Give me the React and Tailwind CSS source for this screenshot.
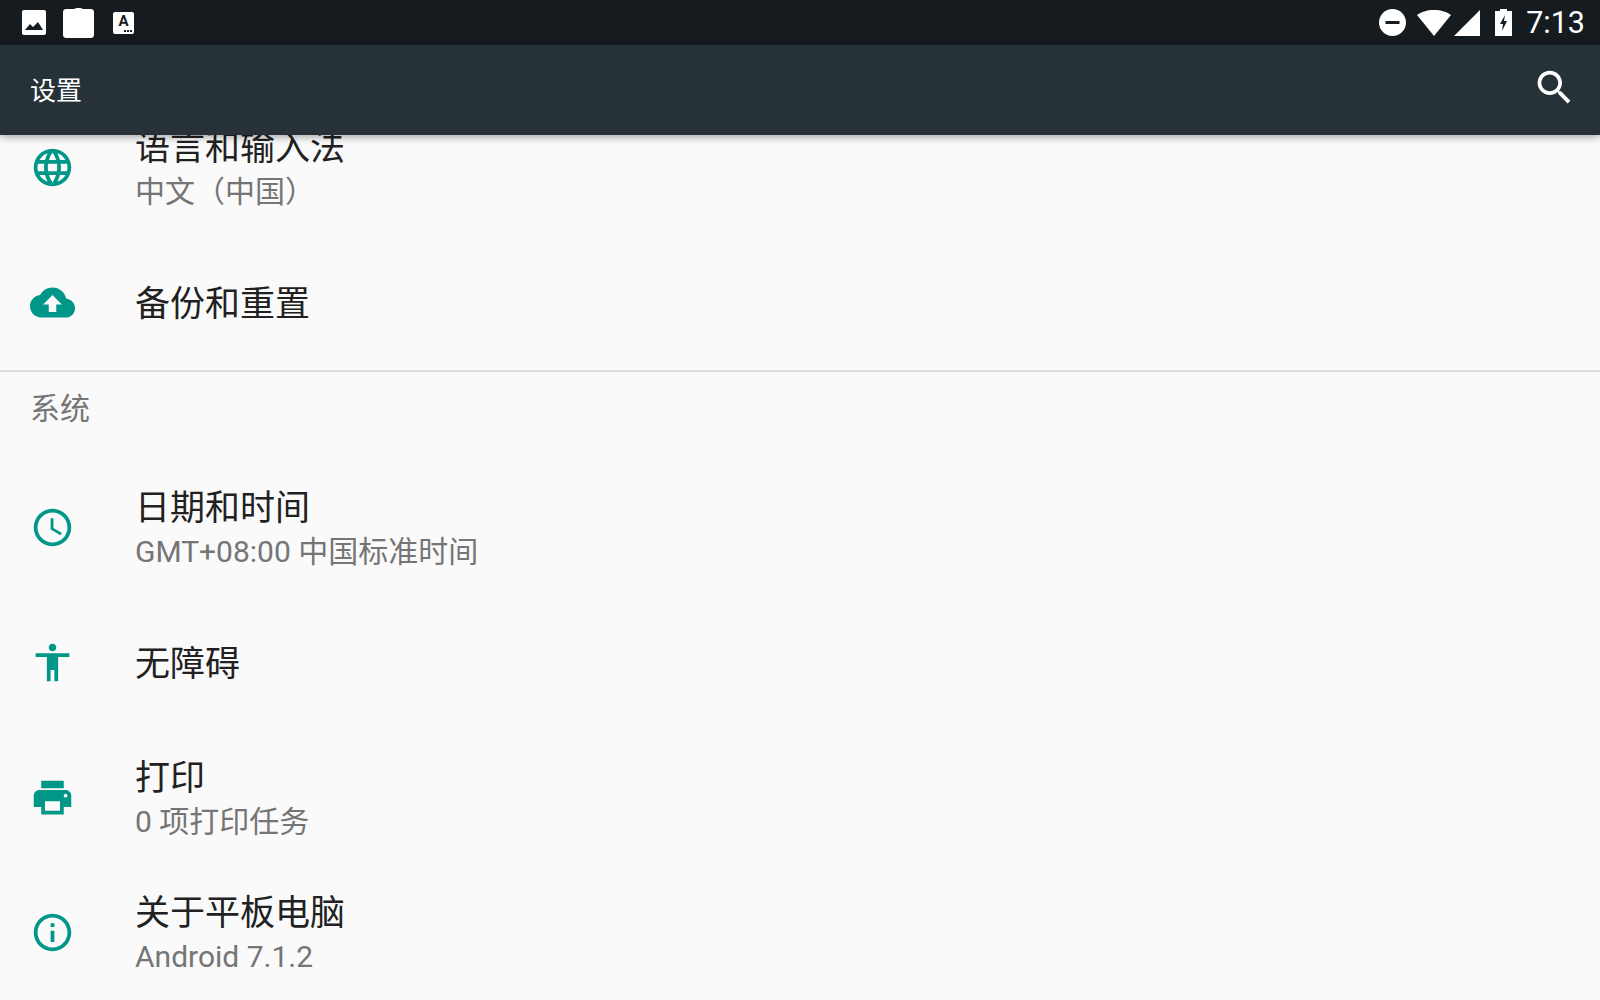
import React from 'react';

const FONT = "font-['Roboto','Noto_Sans_CJK_SC',sans-serif]";

const paths = {
  language:
    'M11.99 2C6.47 2 2 6.48 2 12s4.47 10 9.99 10C17.52 22 22 17.52 22 12S17.52 2 11.99 2zm6.93 6h-2.95c-.32-1.25-.78-2.45-1.38-3.56 1.84.63 3.37 1.91 4.33 3.56zM12 4.04c.83 1.2 1.48 2.53 1.91 3.96h-3.82c.43-1.43 1.08-2.76 1.91-3.96zM4.26 14C4.1 13.36 4 12.69 4 12s.1-1.36.26-2h3.38c-.08.66-.14 1.32-.14 2 0 .68.06 1.34.14 2H4.26zm.82 2h2.95c.32 1.25.78 2.45 1.38 3.56-1.84-.63-3.37-1.9-4.33-3.56zm2.95-8H5.08c.96-1.66 2.49-2.93 4.33-3.56C8.81 5.55 8.35 6.75 8.03 8zM12 19.96c-.83-1.2-1.48-2.53-1.91-3.96h3.82c-.43 1.43-1.08 2.76-1.91 3.96zM14.34 14H9.66c-.09-.66-.16-1.32-.16-2 0-.68.07-1.35.16-2h4.68c.09.65.16 1.32.16 2 0 .68-.07 1.34-.16 2zm.25 5.56c.6-1.11 1.06-2.31 1.38-3.56h2.95c-.96 1.65-2.49 2.93-4.33 3.56zM16.36 14c.08-.66.14-1.32.14-2 0-.68-.06-1.34-.14-2h3.38c.16.64.26 1.31.26 2s-.1 1.36-.26 2h-3.38z',
  backup:
    'M19.35 10.04C18.67 6.59 15.64 4 12 4 9.11 4 6.6 5.64 5.35 8.04 2.34 8.36 0 10.91 0 14c0 3.31 2.69 6 6 6h13c2.76 0 5-2.24 5-5 0-2.64-2.05-4.78-4.65-4.96zM14 13v4h-4v-4H7l5-5 5 5h-3z',
  clock:
    'M11.99 2C6.47 2 2 6.48 2 12s4.47 10 9.99 10C17.52 22 22 17.52 22 12S17.52 2 11.99 2zM12 20c-4.42 0-8-3.58-8-8s3.58-8 8-8 8 3.58 8 8-3.58 8-8 8zm.5-13H11v6l5.25 3.15.75-1.23-4.5-2.67z',
  accessibility:
    'M12 2c1.1 0 2 .9 2 2s-.9 2-2 2-2-.9-2-2 .9-2 2-2zm9 7h-6v13h-2v-6h-2v6H9V9H3V7h18v2z',
  print:
    'M19 8H5c-1.66 0-3 1.34-3 3v6h4v4h12v-4h4v-6c0-1.66-1.34-3-3-3zm-3 11H8v-5h8v5zm3-7c-.55 0-1-.45-1-1s.45-1 1-1 1 .45 1 1-.45 1-1 1zm-1-9H6v4h12V3z',
  info:
    'M11 17h2v-6h-2v6zm1-15C6.48 2 2 6.48 2 12s4.48 10 10 10 10-4.48 10-10S17.52 2 12 2zm0 18c-4.41 0-8-3.59-8-8s3.59-8 8-8 8 3.59 8 8-3.59 8-8 8zM11 9h2V7h-2v2z',
  search:
    'M15.5 14h-.79l-.28-.27C15.41 12.59 16 11.11 16 9.5 16 5.91 13.09 3 9.5 3S3 5.91 3 9.5 5.91 16 9.5 16c1.61 0 3.09-.59 4.23-1.57l.27.28v.79l5 4.99L20.49 19l-4.99-5zm-6 0C7.01 14 5 11.99 5 9.5S7.01 5 9.5 5 14 7.01 14 9.5 11.99 14 9.5 14z',
};

function Icon({ name, className }) {
  return (
    <svg viewBox="0 0 24 24" fill="currentColor" className={className}>
      <path d={paths[name]} />
    </svg>
  );
}

function StatusBar() {
  return (
    <div className="h-[45px] bg-[#151b1e] flex items-center justify-between shrink-0">
      <div className="flex items-center pl-[22px]">
        {/* picture notification */}
        <svg viewBox="0 0 24 25" className="w-[24px] h-[25px]">
          <rect x="0" y="0" width="24" height="25" rx="2" fill="#fff" />
          <path d="M3 20l5-6 3 3 5-5 5 8z" fill="#151b1e" />
        </svg>
        {/* clipboard */}
        <svg viewBox="0 0 31 31" className="w-[31px] h-[31px] ml-[17px]">
          <path
            d="M3 2h8c1-1.5 8-1.5 9 0h8c1.5 0 3 1 3 3v23c0 2-1.500 3-3 3H3c-1.500 0-3-1-3-3V5c0-2 1.500-3 3-3z"
            fill="#fff"
          />
        </svg>
        <div className="relative ml-[19px] w-[21px] h-[22px] bg-white rounded-[2px] flex justify-center">
          <span className="text-[#151b1e] text-[15px] leading-[18px] font-bold font-['Roboto',sans-serif]">A</span>
          <span className="absolute right-[2px] bottom-[2px] w-[8px] h-[2px] border-b-2 border-dotted border-[#151b1e]" />
        </div>
      </div>
      <div className="flex items-center pr-[15px]">
        {/* do not disturb */}
        <svg viewBox="0 0 27 27" className="w-[27px] h-[27px]">
          <circle cx="13.500" cy="13.500" r="13.500" fill="#fff" />
          <rect x="6.500" y="12" width="14" height="3" fill="#151b1e" />
        </svg>
        {/* wifi */}
        <svg viewBox="0 0 34 26" className="w-[34px] h-[26px] ml-[11px]">
          <path d="M17 26L0 5C4 2 10 0 17 0s13 2 17 5z" fill="#fff" />
        </svg>
        {/* signal */}
        <svg viewBox="0 0 26 26" className="w-[26px] h-[26px] ml-[3px]">
          <path d="M0 26L26 0v26z" fill="#fff" />
        </svg>
        {/* battery charging */}
        <svg viewBox="0 0 17 27" className="w-[17px] h-[27px] ml-[15px]">
          <path d="M5 2V0h7v2h5v25H0V2z" fill="#fff" />
          <path d="M10 6L5 15h3l-1 7 5-10H9z" fill="#151b1e" />
        </svg>
        <span className="ml-[14px] text-white text-[30.500px] leading-[45px] font-['Roboto',sans-serif]">7:13</span>
      </div>
    </div>
  );
}

function Row({ icon, title, sub }) {
  return (
    <div className="h-[135px] flex items-center pl-[30px]">
      <div className="w-[45px] h-[45px] flex items-center justify-center text-[#009688]">
        <Icon name={icon} className="w-[45px] h-[45px]" />
      </div>
      <div className="ml-[60px] pt-[3px]">
        <div className="text-[35px] leading-[45px] text-[#212121]">{title}</div>
        {sub && <div className="text-[30px] leading-[42px] text-[#757575]">{sub}</div>}
      </div>
    </div>
  );
}

export default function App() {
  return (
    <div className={`w-[1600px] h-[1000px] overflow-hidden flex flex-col bg-[#fafafa] ${FONT}`}>
      <StatusBar />
      <div className="relative z-10 h-[90px] bg-[#263238] shrink-0 flex items-center justify-between pl-[30px] pr-[23px] shadow-[0_2px_8px_rgba(0,0,0,0.35)]">
        <span className="text-white text-[26px] leading-[90px] pt-[1px]">设置</span>
        <Icon name="search" className="w-[45px] h-[45px] text-white -mt-[5px]" />
      </div>
      <div className="flex-1 overflow-hidden">
        <div className="-mt-[35px]">
          <Row icon="language" title="语言和输入法" sub="中文（中国）" />
          <Row icon="backup" title="备份和重置" />
          <div className="h-[2px] bg-[#dcdcdc]" />
          <div className="h-[88px] pl-[30px] pt-[14px] text-[30px] leading-[45px] text-[#757575]">系统</div>
          <Row icon="clock" title="日期和时间" sub="GMT+08:00 中国标准时间" />
          <Row icon="accessibility" title="无障碍" />
          <Row icon="print" title="打印" sub="0 项打印任务" />
          <Row icon="info" title="关于平板电脑" sub="Android 7.1.2" />
        </div>
      </div>
    </div>
  );
}
